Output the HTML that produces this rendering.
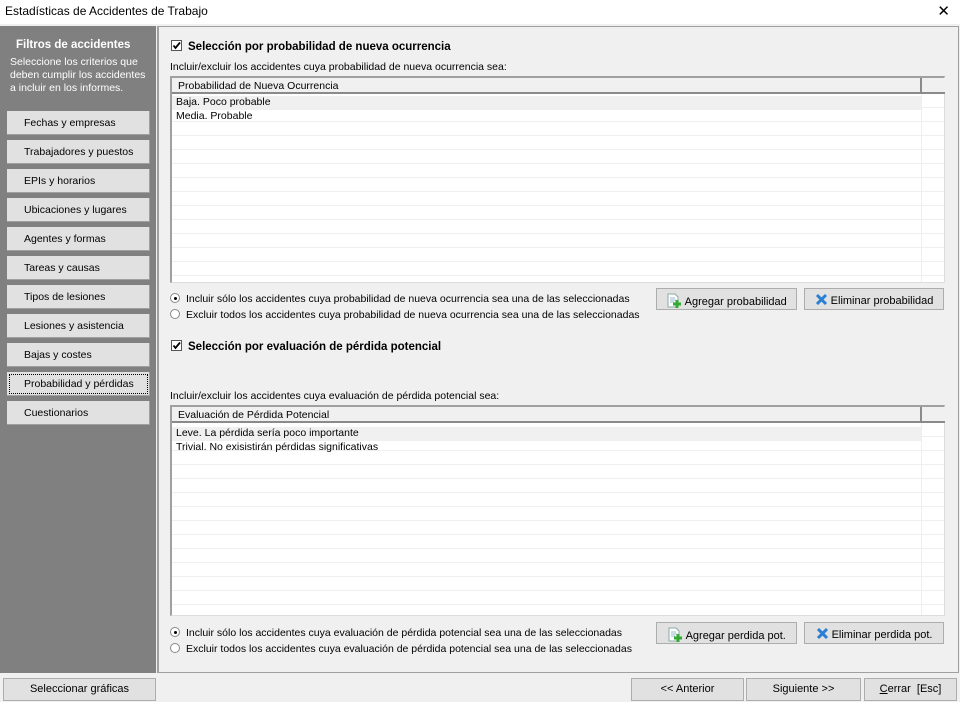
<!DOCTYPE html>
<html><head><meta charset="utf-8"><style>
*{box-sizing:border-box;margin:0;padding:0}
body{width:960px;height:702px;background:#f0f0f0;font-family:"Liberation Sans",Arial,sans-serif;font-size:10.5px;color:#000;position:relative;overflow:hidden}
.a{position:absolute;white-space:nowrap}
.title{left:0;top:0;width:960px;height:24px;background:#fff;font-size:12px;padding:4px 0 0 5px}
.x{right:10px;top:2px;font-size:15px}
.side{left:0;top:26px;width:156px;height:647px;background:#808080}
.sb{position:absolute;left:7px;width:143px;height:24px;background:#e1e1e1;border-right:1px solid #a0a0a0;border-bottom:1px solid #a0a0a0;padding:6px 0 0 17px;white-space:nowrap}
.main{left:157px;top:26px;width:802px;height:647px;border:1px solid #a0a0a0;border-left:2px solid #a0a0a0}
.grid{position:absolute;left:170px;width:775px;background:#fff;border:2px solid #a0a0a0;border-right:1px solid #ddd;border-bottom:1px solid #ddd;
background-image:repeating-linear-gradient(to bottom,transparent 0,transparent 13px,#efefef 13px,#efefef 14px);background-position:0 16px}
.gh{position:absolute;left:0;top:0;width:773px;height:16px;background:#f0f0f0;border-bottom:2px solid #8a8a8a;padding:2px 0 0 6px}
.gh i{position:absolute;left:748px;top:0;width:2px;height:16px;background:#8a8a8a}
.vl{position:absolute;left:749px;top:16px;width:1px;bottom:0;background:#efefef}
.row{position:absolute;left:0;width:749px;height:14px;padding:0 0 0 4px}
.btn{position:absolute;height:22px;background:#e1e1e1;border:1px solid #adadad;text-align:center;padding-top:4px;font-size:11px}
.chk{display:inline-block;width:11px;height:11px;border:1px solid #555;background:#fff;vertical-align:-1px;margin-right:6px;position:relative}
.rad{display:inline-block;width:10px;height:10px;border-radius:50%;border:1px solid #888;background:#fff;vertical-align:-1px;margin-right:6px;position:relative}
.rad.on:after{content:"";position:absolute;left:2.5px;top:2.5px;width:3px;height:3px;border-radius:50%;background:#000}
b{font-size:11.5px}
</style></head><body>
<div class="a title">Estadísticas de Accidentes de Trabajo</div>
<div class="a x">✕</div>
<div class="a side">
 <div class="a" style="left:16px;top:13px;color:#fff;font-weight:bold;font-size:11.5px">Filtros de accidentes</div>
 <div class="a" style="left:10px;top:30px;color:#fff;line-height:13px;white-space:normal;width:140px">Seleccione los criterios que deben cumplir los accidentes a incluir en los informes.</div>
 <div class="sb" style="top:85px">Fechas y empresas</div>
 <div class="sb" style="top:114px">Trabajadores y puestos</div>
 <div class="sb" style="top:143px">EPIs y horarios</div>
 <div class="sb" style="top:172px">Ubicaciones y lugares</div>
 <div class="sb" style="top:201px">Agentes y formas</div>
 <div class="sb" style="top:230px">Tareas y causas</div>
 <div class="sb" style="top:259px">Tipos de lesiones</div>
 <div class="sb" style="top:288px">Lesiones y asistencia</div>
 <div class="sb" style="top:317px">Bajas y costes</div>
 <div class="sb" style="top:346px;outline:1px dotted #000;outline-offset:-3px">Probabilidad y pérdidas</div>
 <div class="sb" style="top:375px">Cuestionarios</div>
</div>
<div class="a main"></div>

<div class="a" style="left:171px;top:40px"><span class="chk"><svg width="9" height="9" style="position:absolute;left:0;top:0"><path d="M1.5 4.5 L3.5 7 L8 1.5" stroke="#000" stroke-width="1.8" fill="none"/></svg></span><b>Selección por probabilidad de nueva ocurrencia</b></div>
<div class="a" style="left:170px;top:61px">Incluir/excluir los accidentes cuya probabilidad de nueva ocurrencia sea:</div>
<div class="grid" style="top:76px;height:207px">
 <div class="gh">Probabilidad de Nueva Ocurrencia<i></i></div><div class="vl"></div>
 <div class="row" style="top:18px;background:#f0f0f0">Baja. Poco probable</div>
 <div class="row" style="top:32px">Media. Probable</div>
</div>
<div class="a" style="left:170px;top:293px"><span class="rad on"></span>Incluir sólo los accidentes cuya probabilidad de nueva ocurrencia sea una de las seleccionadas</div>
<div class="a" style="left:170px;top:309px"><span class="rad"></span>Excluir todos los accidentes cuya probabilidad de nueva ocurrencia sea una de las seleccionadas</div>
<div class="btn" style="left:656px;top:288px;width:141px"><svg width="16" height="15" style="vertical-align:-3px"><path d="M2 1h7l3 3v10H2z" fill="#fff" stroke="#8aa"/><path d="M4 5h5M4 7h6M4 9h4" stroke="#9bc"/><path d="M11 7v8M7 11h8" stroke="#3a3" stroke-width="3"/></svg> Agregar probabilidad</div>
<div class="btn" style="left:804px;top:288px;width:140px"><svg width="13" height="13" style="vertical-align:-2px"><path d="M2 2L11 11M11 2L2 11" stroke="#2a7fd4" stroke-width="3"/></svg> Eliminar probabilidad</div>

<div class="a" style="left:171px;top:340px"><span class="chk"><svg width="9" height="9" style="position:absolute;left:0;top:0"><path d="M1.5 4.5 L3.5 7 L8 1.5" stroke="#000" stroke-width="1.8" fill="none"/></svg></span><b>Selección por evaluación de pérdida potencial</b></div>
<div class="a" style="left:170px;top:390px">Incluir/excluir los accidentes cuya evaluación de pérdida potencial sea:</div>
<div class="grid" style="top:405px;height:211px">
 <div class="gh">Evaluación de Pérdida Potencial<i></i></div><div class="vl"></div>
 <div class="row" style="top:20px;background:#f0f0f0">Leve. La pérdida sería poco importante</div>
 <div class="row" style="top:34px">Trivial. No exisistirán pérdidas significativas</div>
</div>
<div class="a" style="left:170px;top:627px"><span class="rad on"></span>Incluir sólo los accidentes cuya evaluación de pérdida potencial sea una de las seleccionadas</div>
<div class="a" style="left:170px;top:643px"><span class="rad"></span>Excluir todos los accidentes cuya evaluación de pérdida potencial sea una de las seleccionadas</div>
<div class="btn" style="left:656px;top:622px;width:141px"><svg width="16" height="15" style="vertical-align:-3px"><path d="M2 1h7l3 3v10H2z" fill="#fff" stroke="#8aa"/><path d="M4 5h5M4 7h6M4 9h4" stroke="#9bc"/><path d="M11 7v8M7 11h8" stroke="#3a3" stroke-width="3"/></svg> Agregar perdida pot.</div>
<div class="btn" style="left:804px;top:622px;width:140px"><svg width="13" height="13" style="vertical-align:-2px"><path d="M2 2L11 11M11 2L2 11" stroke="#2a7fd4" stroke-width="3"/></svg> Eliminar perdida pot.</div>

<div class="btn" style="left:3px;top:678px;width:153px;height:23px">Seleccionar gráficas</div>
<div class="btn" style="left:631px;top:678px;width:113px;height:23px">&lt;&lt; Anterior</div>
<div class="btn" style="left:746px;top:678px;width:115px;height:23px">Siguiente &gt;&gt;</div>
<div class="btn" style="left:864px;top:678px;width:93px;height:23px"><u>C</u>errar&nbsp; [Esc]</div>
</body></html>
